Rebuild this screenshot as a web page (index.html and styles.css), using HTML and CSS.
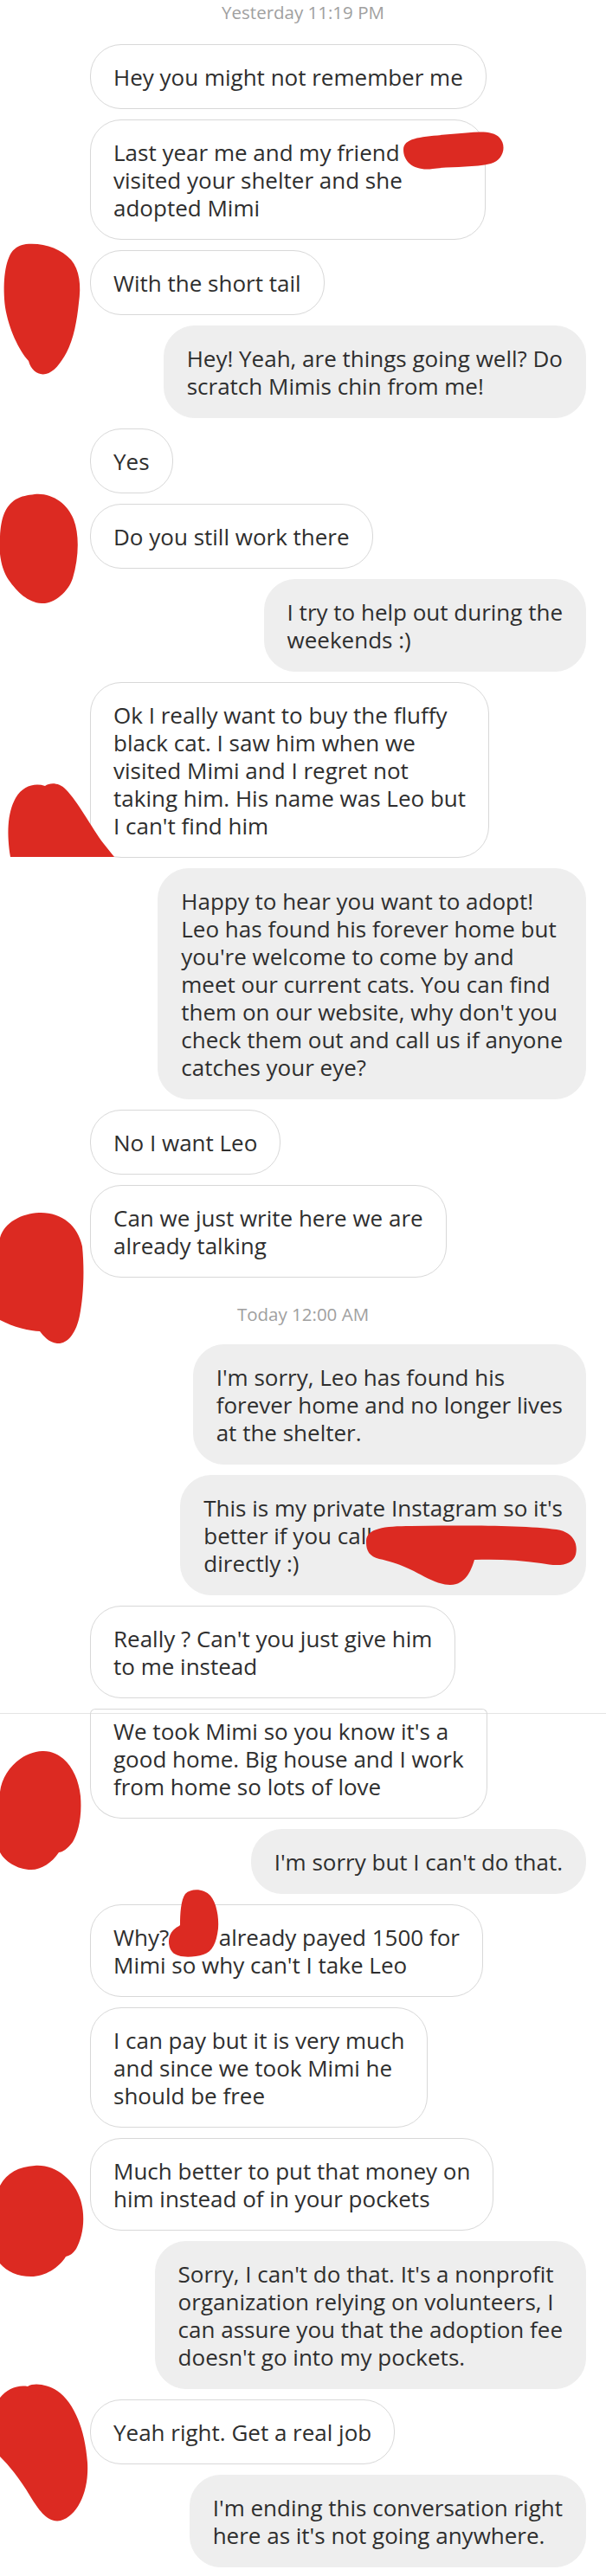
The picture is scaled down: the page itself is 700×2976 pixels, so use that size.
FILE: index.html
```html
<!DOCTYPE html>
<html lang="en">
<head>
    <meta charset="UTF-8">
    <meta name="viewport" content="width=device-width, initial-scale=1.0">
    <title>Chat</title>
    <link rel="stylesheet" href="styles.css">
</head>
<body>

    <div class="page">

        <!-- first screenshot -->
        <div class="screen">
            <div class="stamp first">Yesterday 11:19 PM</div>
            <div class="msg in">Hey you might not remember me</div>
            <div class="msg in">Last year me and my friend <span class="hidden-name"></span><br>visited your shelter and she<br>adopted Mimi</div>
            <div class="msg in">With the short tail</div>
            <div class="msg out">Hey! Yeah, are things going well? Do<br>scratch Mimis chin from me!</div>
            <div class="msg in">Yes</div>
            <div class="msg in">Do you still work there</div>
            <div class="msg out">I try to help out during the<br>weekends :)</div>
            <div class="msg in">Ok I really want to buy the fluffy<br>black cat. I saw him when we<br>visited Mimi and I regret not<br>taking him. His name was Leo but<br>I can't find him</div>
            <div class="msg out">Happy to hear you want to adopt!<br>Leo has found his forever home but<br>you're welcome to come by and<br>meet our current cats. You can find<br>them on our website, why don't you<br>check them out and call us if anyone<br>catches your eye?</div>
            <div class="msg in">No I want Leo</div>
            <div class="msg in">Can we just write here we are<br>already talking</div>
            <div class="stamp second">Today 12:00 AM</div>
            <div class="msg out">I'm sorry, Leo has found his<br>forever home and no longer lives<br>at the shelter.</div>
            <div class="msg out">This is my private Instagram so it's<br>better if you call<br>directly :)</div>
            <div class="msg in">Really ? Can't you just give him<br>to me instead</div>
        </div>

        <!-- second screenshot, scrolled -->
        <div class="screen next">
            <div class="msg in cut">We took Mimi so you know it's a<br>good home. Big house and I work<br>from home so lots of love</div>
            <div class="msg out">I'm sorry but I can't do that.</div>
            <div class="msg in">Why? <span class="hidden-word"></span> already payed 1500 for<br>Mimi so why can't I take Leo</div>
            <div class="msg in">I can pay but it is very much<br>and since we took Mimi he<br>should be free</div>
            <div class="msg in">Much better to put that money on<br>him instead of in your pockets</div>
            <div class="msg out">Sorry, I can't do that. It's a nonprofit<br>organization relying on volunteers, I<br>can assure you that the adoption fee<br>doesn't go into my pockets.</div>
            <div class="msg in">Yeah right. Get a real job</div>
            <div class="msg out">I'm ending this conversation right<br>here as it's not going anywhere.</div>
        </div>

        <!-- red scribbles drawn over the names and avatars -->
        <svg class="scribbles" viewBox="0 0 700 2976" width="700" height="2976">
            <g fill="#dc2a22">
                <path d="M466 173 C466 158 490 158 520 155 C546 153 568 149 577 159 C586 169 581 185 567 189 C545 194 520 192 500 195 C480 198 466 188 466 173 Z"/>
                <path d="M30 282 C50 280 70 287 82 300 C92 312 94 330 91 350 C89 370 85 392 77 407 C70 420 62 430 53 432 C44 434 36 428 33 417 C22 405 10 380 6 355 C3 330 5 305 13 292 C18 285 24 283 30 282 Z"/>
                <path d="M40 571 C60 569 78 582 85 600 C92 618 91 645 84 668 C79 684 62 698 48 697 C32 696 20 684 10 670 C2 658 -2 640 0 620 C1 598 6 585 18 577 C25 573 32 572 40 571 Z"/>
                <path d="M12 990 C8 965 8 940 18 922 C26 908 40 904 52 908 C58 904 68 904 76 912 C90 926 105 955 120 975 L132 990 Z"/>
                <path d="M0 1430 C5 1412 25 1402 45 1401 C70 1400 90 1415 95 1440 C98 1470 96 1500 92 1520 C88 1540 78 1553 66 1552 C56 1551 50 1543 46 1538 C35 1538 15 1533 0 1525 Z"/>
                <path d="M423 1782 C422 1766 442 1763 475 1763 C535 1762 605 1762 643 1767 C662 1770 668 1783 665 1796 C661 1809 645 1810 625 1806 C600 1802 572 1801 548 1802 C545 1812 540 1826 527 1830 C512 1834 495 1824 478 1815 C462 1807 448 1803 438 1801 C427 1798 423 1792 423 1782 Z"/>
                <path d="M49 2023 C72 2022 90 2045 93 2075 C95 2100 90 2118 84 2128 C78 2136 72 2140 68 2140 C60 2152 48 2160 36 2160 C20 2160 5 2150 0 2140 L0 2070 C3 2045 25 2024 49 2023 Z"/>
                <path d="M214 2188 C221 2181 236 2182 243 2190 C250 2198 253 2215 252 2228 C250 2245 245 2255 235 2258 C222 2262 205 2262 199 2255 C193 2248 194 2236 200 2230 C204 2226 206 2226 208 2224 C208 2210 209 2195 214 2188 Z"/>
                <path d="M40 2502 C65 2500 88 2520 94 2545 C99 2565 95 2585 88 2598 C84 2604 80 2606 76 2607 C68 2620 52 2630 36 2630 C20 2630 8 2624 0 2615 L0 2525 C8 2510 22 2503 40 2502 Z"/>
                <path d="M0 2770 C8 2760 20 2755 32 2757 C40 2752 55 2755 66 2762 C85 2775 98 2805 101 2845 C103 2878 90 2906 70 2912 C55 2915 45 2900 35 2884 C22 2862 10 2848 0 2838 Z"/>
            </g>
        </svg>

    </div>

</body>
</html>
```

FILE: styles.css
```css
body {
    margin: 0;
    background-color: #fff;
    font-family: "Open Sans", "Noto Sans", sans-serif;
    color: #2e2e2e;
}

.page {
    position: relative;
    width: 700px;
    height: 2976px;
    overflow: hidden;
}

.screen {
    display: flex;
    flex-direction: column;
    gap: 12px;
}

    .screen.next {
        margin-top: 17px;
        border-top: 1px solid #e4e4e4;
    }

/* date separators */
.stamp {
    align-self: center;
    font-size: 20.5px;
    line-height: 26px;
    color: #a0a0a0;
}

    .stamp.first {
        padding: 1px 0 12px;
    }

    .stamp.second {
        padding: 17px 0 10px;
    }

/* bubbles */
.msg {
    font-size: 26px;
    line-height: 32px;
    white-space: nowrap;
    padding: 21px 26px 20px;
    border-radius: 36px;
    border: 1px solid transparent;
}

    .msg.in {
        align-self: flex-start;
        margin-left: 104px;
        background-color: #fff;
        border-color: #d8d8d8;
    }

    .msg.out {
        align-self: flex-end;
        margin-right: 23px;
        background-color: #eeeeee;
        border-color: #eeeeee;
    }

    /* bubble cut by the top of the second screenshot */
    .msg.cut {
        position: relative;
        padding-top: 4px;
        border-top: none;
        border-radius: 0 0 36px 36px;
    }

        .msg.cut::before {
            content: "";
            position: absolute;
            left: -1px;
            right: -1px;
            top: -6px;
            height: 5px;
            border: 1px solid #d8d8d8;
            border-bottom: none;
            border-radius: 36px 36px 0 0;
        }

.hidden-name {
    display: inline-block;
    width: 66px;
}

.hidden-word {
    display: inline-block;
    width: 44px;
}

.scribbles {
    position: absolute;
    top: 0;
    left: 0;
    pointer-events: none;
}
```
